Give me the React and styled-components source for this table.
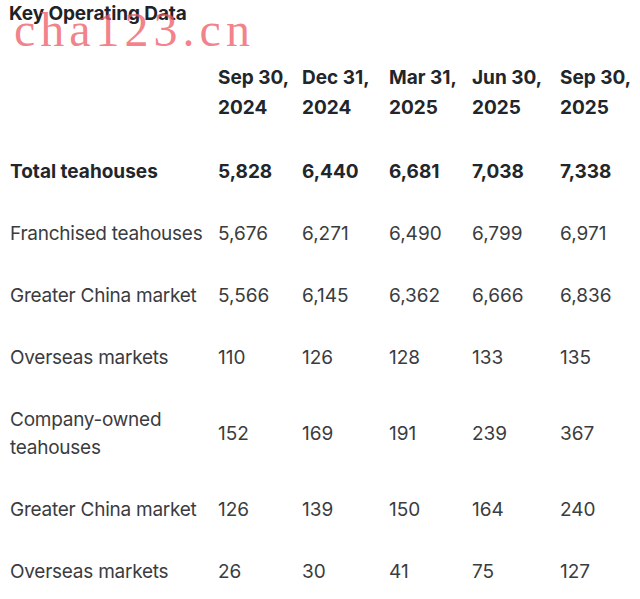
import styled, { createGlobalStyle } from "styled-components";

const GlobalStyle = createGlobalStyle`
  html, body {
    margin: 0;
    padding: 0;
    background: #ffffff;
  }
  body {
    font-family: Inter, "Noto Sans", sans-serif;
  }
`;

const columns = ["Sep 30, 2024", "Dec 31, 2024", "Mar 31, 2025", "Jun 30, 2025", "Sep 30, 2025"];
const colWidths = [209, 84, 87, 83, 88, 89];

const rows = [
  { label: "Total teahouses", values: ["5,828", "6,440", "6,681", "7,038", "7,338"], strong: true },
  { label: "Franchised teahouses", values: ["5,676", "6,271", "6,490", "6,799", "6,971"] },
  { label: "Greater China market", values: ["5,566", "6,145", "6,362", "6,666", "6,836"] },
  { label: "Overseas markets", values: ["110", "126", "128", "133", "135"] },
  { label: "Company-owned teahouses", values: ["152", "169", "191", "239", "367"] },
  { label: "Greater China market", values: ["126", "139", "150", "164", "240"] },
  { label: "Overseas markets", values: ["26", "30", "41", "75", "127"] },
];

export default function App() {
  return (
    <Page>
      <GlobalStyle />
      <Title>Key Operating Data</Title>
      <DataTable>
        <colgroup>
          {colWidths.map((w, i) => (
            <col key={i} style={{ width: w }} />
          ))}
        </colgroup>
        <thead>
          <tr>
            <HeadCell />
            {columns.map((c) => (
              <HeadCell key={c}>{c}</HeadCell>
            ))}
            <HeadCell />
          </tr>
        </thead>
        <tbody>
          {rows.map((r, i) => (
            <tr key={i}>
              <LabelCell $strong={r.strong}>
                {r.label === "Company-owned teahouses" ? (
                  <>
                    Company-owned
                    <br />
                    teahouses
                  </>
                ) : (
                  r.label
                )}
              </LabelCell>
              {r.values.map((v, j) => (
                <ValueCell key={j} $strong={r.strong}>
                  {v}
                </ValueCell>
              ))}
              <ValueCell />
            </tr>
          ))}
        </tbody>
      </DataTable>
      <Watermark>cha123.cn</Watermark>
    </Page>
  );
}

const Page = styled.div`
  position: relative;
  width: 640px;
  height: 599px;
  overflow: hidden;
  padding-left: 9px;
  box-sizing: border-box;
`;

const Title = styled.h2`
  margin: 0 0 20px;
  padding-top: 1px;
  font-size: 19px;
  line-height: 25px;
  font-weight: 700;
  color: #1f2226;
  letter-spacing: -0.1px;
`;

const DataTable = styled.table`
  table-layout: fixed;
  border-collapse: collapse;
  width: 631px;
`;

const HeadCell = styled.th`
  padding: 17px 8px 18px 0;
  text-align: left;
  vertical-align: top;
  font-size: 19px;
  line-height: 30px;
  font-weight: 700;
  color: #22262b;
`;

const LabelCell = styled.td`
  padding: 17px 0 17px 1px;
  font-size: 19px;
  line-height: 28px;
  font-weight: ${(p) => (p.$strong ? 700 : 400)};
  color: ${(p) => (p.$strong ? "#22262b" : "#3a3c40")};
  letter-spacing: ${(p) => (p.$strong ? "0" : "-0.25px")};
  white-space: nowrap;
  vertical-align: middle;
`;

const ValueCell = styled.td`
  padding: 17px 0;
  font-size: 19px;
  line-height: 28px;
  font-weight: ${(p) => (p.$strong ? 700 : 400)};
  color: ${(p) => (p.$strong ? "#22262b" : "#3a3c40")};
  vertical-align: middle;
`;

const Watermark = styled.div`
  position: absolute;
  top: 6px;
  left: 14px;
  font-family: "Liberation Serif", serif;
  font-size: 48px;
  line-height: 48px;
  letter-spacing: 5px;
  color: rgba(238, 90, 100, 0.75);
  pointer-events: none;
`;
